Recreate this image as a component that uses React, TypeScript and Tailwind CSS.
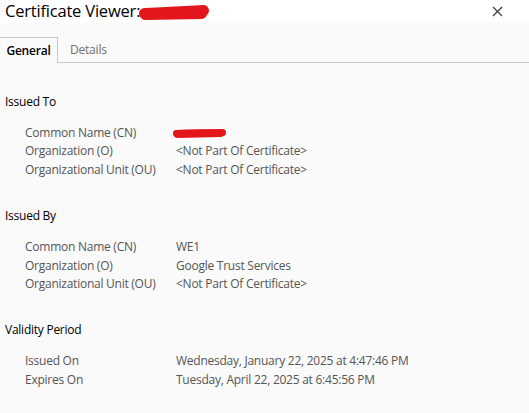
import React from 'react';

type Row = { label: string; value: string; redacted?: boolean };

const sections: { title: string; rows: Row[] }[] = [
  {
    title: 'Issued To',
    rows: [
      { label: 'Common Name (CN)', value: 'example', redacted: true },
      { label: 'Organization (O)', value: '<Not Part Of Certificate>' },
      { label: 'Organizational Unit (OU)', value: '<Not Part Of Certificate>' },
    ],
  },
  {
    title: 'Issued By',
    rows: [
      { label: 'Common Name (CN)', value: 'WE1' },
      { label: 'Organization (O)', value: 'Google Trust Services' },
      { label: 'Organizational Unit (OU)', value: '<Not Part Of Certificate>' },
    ],
  },
  {
    title: 'Validity Period',
    rows: [
      { label: 'Issued On', value: 'Wednesday, January 22, 2025 at 4:47:46 PM' },
      { label: 'Expires On', value: 'Tuesday, April 22, 2025 at 6:45:56 PM' },
    ],
  },
];

function Scribble({ width, height, stroke }: { width: number; height: number; stroke: number }) {
  // red marker strokes hiding a value
  const w = width;
  const h = height;
  const r = stroke / 2;
  return (
    <svg width={w} height={h} viewBox={`0 0 ${w} ${h}`} className="absolute left-0 top-0">
      <g stroke="#e3161c" strokeLinecap="round" fill="none" strokeWidth={stroke}>
        <path d={`M${r} ${h - r - 1} Q ${w * 0.4} ${h - r - 2} ${w - r} ${r + 1}`} />
        <path d={`M${r + 1} ${h - r} L ${w - r - 2} ${h - r - 1}`} />
      </g>
    </svg>
  );
}

export default function App() {
  return (
    <div className="w-[529px] h-[413px] bg-[#fafafa] flex flex-col overflow-hidden text-black" style={{ fontFamily: '"Open Sans", "Noto Sans", sans-serif' }}>
      {/* Title bar */}
      <div className="h-[23px] bg-white flex items-center pl-[5px] pr-[26px] shrink-0">
        <span className="text-[16.5px] leading-none tracking-[-0.2px]">Certificate Viewer:</span>
        <span className="relative inline-block w-[70px] h-[16px] ml-[-1px] mt-[1px]">
          <Scribble width={70} height={16} stroke={11} />
        </span>
        <svg width="11" height="11" viewBox="0 0 11 11" className="ml-auto">
          <path d="M1 1 L10 10 M10 1 L1 10" stroke="#444" strokeWidth="1.4" />
        </svg>
      </div>

      {/* Tabs */}
      <div className="h-[40px] flex items-end shrink-0">
        <div className="h-[26px] w-[58px] bg-[#fafafa] border-t border-r border-[#c8c8c8] flex items-center justify-center text-[12px] font-semibold tracking-[-0.2px]">
          General
        </div>
        <div className="flex-1 h-[26px] border-b border-[#c8c8c8] flex items-center">
          <span className="ml-[12px] text-[12px] text-[#6e6e6e] tracking-[-0.2px]">Details</span>
        </div>
      </div>

      {/* Content */}
      <div className="flex flex-col pl-[5px] pt-[30px] gap-[28px] text-[12px] tracking-[-0.25px]">
        {sections.map((s) => (
          <div key={s.title} className="flex flex-col gap-[13px]">
            <div className="leading-[18px]">{s.title}</div>
            <div className="flex flex-col pl-[20px]">
              {s.rows.map((r) => (
                <div key={r.label} className="flex leading-[18.4px] text-[#555]">
                  <span className="w-[151px] shrink-0">{r.label}</span>
                  {r.redacted ? (
                    <span className="relative inline-block w-[53px] h-[10px] mt-[4px] -ml-[3px]">
                      <Scribble width={53} height={10} stroke={7} />
                    </span>
                  ) : (
                    <span>{r.value}</span>
                  )}
                </div>
              ))}
            </div>
          </div>
        ))}
      </div>
    </div>
  );
}
